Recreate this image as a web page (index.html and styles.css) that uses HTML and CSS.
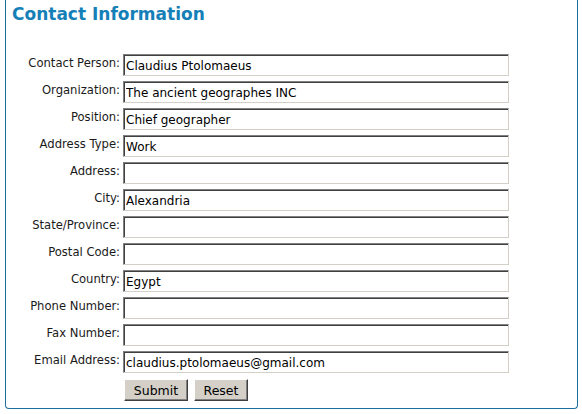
FILE: index.html
```html
<!DOCTYPE html>
<html>
<head>
<meta charset="utf-8">
<link rel="stylesheet" href="styles.css">
</head>
<body>
<div class="panel">
  <h1 class="title">Contact Information</h1>
  <form class="form">
    <label class="lbl">Contact Person:</label><input class="fld" type="text" value="Claudius Ptolomaeus">
    <label class="lbl">Organization:</label><input class="fld" type="text" value="The ancient geographes INC">
    <label class="lbl">Position:</label><input class="fld" type="text" value="Chief geographer">
    <label class="lbl">Address Type:</label><input class="fld" type="text" value="Work">
    <label class="lbl">Address:</label><input class="fld" type="text" value="">
    <label class="lbl">City:</label><input class="fld" type="text" value="Alexandria">
    <label class="lbl">State/Province:</label><input class="fld" type="text" value="">
    <label class="lbl">Postal Code:</label><input class="fld" type="text" value="">
    <label class="lbl">Country:</label><input class="fld" type="text" value="Egypt">
    <label class="lbl">Phone Number:</label><input class="fld" type="text" value="">
    <label class="lbl">Fax Number:</label><input class="fld" type="text" value="">
    <label class="lbl">Email Address:</label><input class="fld" type="text" value="claudius.ptolomaeus@gmail.com">
    <span></span>
    <div class="btns"><button type="button" class="btn btn-submit">Submit</button><button type="button" class="btn btn-reset">Reset</button></div>
  </form>
</div>
</body>
</html>
```
FILE: styles.css
```css
html, body { margin: 0; padding: 0; background: #fff; }
body { font-family: "DejaVu Sans", Verdana, sans-serif; }
.panel {
  margin-left: 5px;
  width: 571px;
  height: 408px;
  border: 1px solid #1b6f9c;
  border-top: none;
  border-radius: 0 0 4px 4px;
}
.title {
  margin: 0;
  padding: 4px 0 0 6px;
  height: 30px;
  font-size: 17px;
  font-weight: bold;
  color: #1580b8;
  line-height: 20px;
}
.form {
  display: grid;
  grid-template-columns: 114px 386px;
  column-gap: 3px;
  row-gap: 5px;
  margin-top: 20px;
}
.lbl {
  font-size: 11.6px;
  color: #1a1a1a;
  text-align: right;
  line-height: 14px;
  padding-top: 2px;
}
.fld {
  box-sizing: border-box;
  width: 386px;
  height: 22px;
  margin: 0;
  padding: 1px 2px 0;
  font-family: "DejaVu Sans", Verdana, sans-serif;
  font-size: 12px;
  color: #000;
  background: #fff;
  border-top: 1px solid #808080;
  border-left: 1px solid #808080;
  border-right: 1px solid #d4d0c8;
  border-bottom: 1px solid #d4d0c8;
  box-shadow: inset 1px 1px 0 #404040;
  outline: none;
}
.btns { display: flex; gap: 6px; padding-top: 1px; margin-left: 1px; }
.btn {
  box-sizing: border-box;
  height: 22px;
  margin: 0;
  padding: 0;
  font-family: "DejaVu Sans", Verdana, sans-serif;
  font-size: 12.5px;
  color: #000;
  background: #d4d0c8;
  border-top: 1px solid #fff;
  border-left: 1px solid #fff;
  border-right: 1px solid #404040;
  border-bottom: 1px solid #404040;
  box-shadow: inset -1px -1px 0 #808080;
}
.btn-submit { width: 64px; }
.btn-reset { width: 54px; }
```
